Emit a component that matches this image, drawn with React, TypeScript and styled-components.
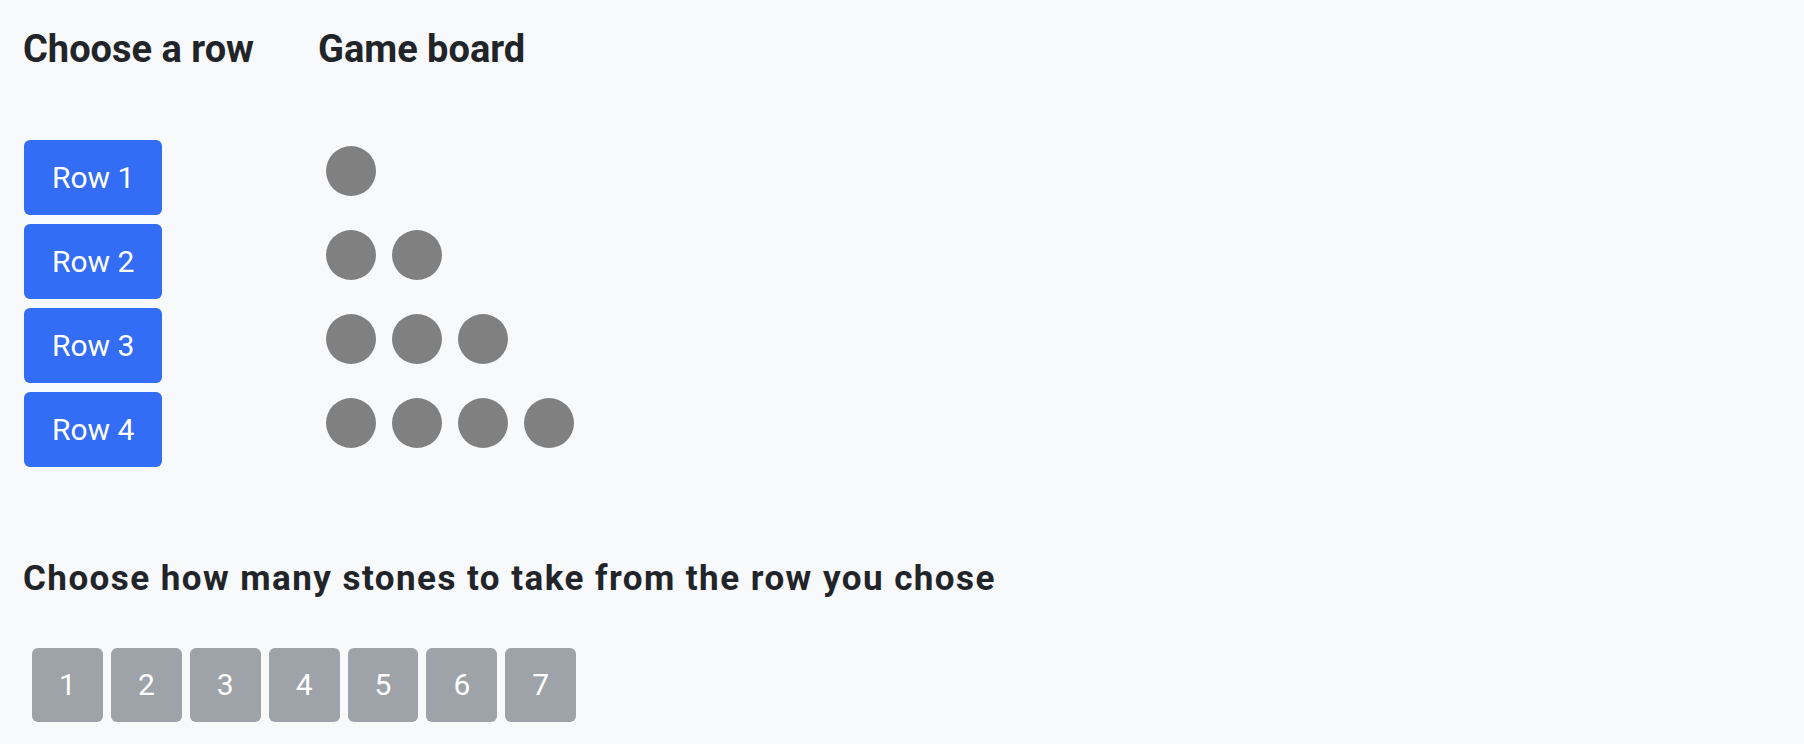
import React from "react";
import styled, { createGlobalStyle } from "styled-components";

const GlobalStyle = createGlobalStyle`
  html, body {
    margin: 0;
    padding: 0;
    background: #f8f9fa;
  }
  body {
    font-family: Roboto, "Liberation Sans", Arial, sans-serif;
    color: #212529;
  }
`;

const Page = styled.div`
  padding: 27px 24px 0 23px;
`;

const TopSection = styled.div`
  display: flex;
  align-items: flex-start;
`;

const ChooserColumn = styled.div`
  width: 295px;
  display: flex;
  flex-direction: column;
`;

const BoardColumn = styled.div`
  display: flex;
  flex-direction: column;
`;

const Heading = styled.h2<{ $size: number; $spacing?: number }>`
  margin: 0;
  font-size: ${(p) => p.$size}px;
  letter-spacing: ${(p) => p.$spacing ?? 0}px;
  font-weight: 700;
  line-height: 1.2;
  white-space: nowrap;
`;

const ButtonList = styled.div`
  display: flex;
  flex-direction: column;
  align-items: flex-start;
  gap: 9px;
  margin-top: 67px;
  padding-left: 1px;
`;

const RowButton = styled.button`
  border: none;
  border-radius: 6px;
  background: #336cf5;
  color: #ffffff;
  font-family: inherit;
  font-size: 30px;
  line-height: 45px;
  padding: 15px 28px;
  cursor: pointer;
`;

const Board = styled.div`
  display: flex;
  flex-direction: column;
  gap: 9px;
  margin-top: 67px;
`;

const StoneRow = styled.div`
  height: 75px;
  box-sizing: border-box;
  padding-top: 6px;
  display: flex;
  align-items: flex-start;
`;

const Stone = styled.span`
  width: 50px;
  height: 50px;
  border-radius: 50%;
  background: #808080;
  margin: 0 8px;
`;

const BottomSection = styled.div`
  margin-top: 91px;
`;

const NumberRow = styled.div`
  display: flex;
  gap: 8px;
  margin-top: 48px;
  padding-left: 9px;
`;

const NumberButton = styled.button`
  border: none;
  border-radius: 6px;
  background: #9da3a9;
  color: #ffffff;
  font-family: inherit;
  font-size: 30px;
  line-height: 45px;
  padding: 14.7px 27px;
  cursor: default;
`;

const rows = [1, 2, 3, 4];
const counts = [1, 2, 3, 4, 5, 6, 7];

export default function App() {
  return (
    <>
      <GlobalStyle />
      <Page>
        <TopSection>
          <ChooserColumn>
            <Heading $size={38}>Choose a row</Heading>
            <ButtonList>
              {rows.map((r) => (
                <RowButton key={r}>Row {r}</RowButton>
              ))}
            </ButtonList>
          </ChooserColumn>
          <BoardColumn>
            <Heading $size={38}>Game board</Heading>
            <Board>
              {rows.map((r) => (
                <StoneRow key={r}>
                  {Array.from({ length: r }).map((_, i) => (
                    <Stone key={i} />
                  ))}
                </StoneRow>
              ))}
            </Board>
          </BoardColumn>
        </TopSection>
        <BottomSection>
          <Heading $size={35} $spacing={1.45}>
            Choose how many stones to take from the row you chose
          </Heading>
          <NumberRow>
            {counts.map((n) => (
              <NumberButton key={n} disabled>
                {n}
              </NumberButton>
            ))}
          </NumberRow>
        </BottomSection>
      </Page>
    </>
  );
}
